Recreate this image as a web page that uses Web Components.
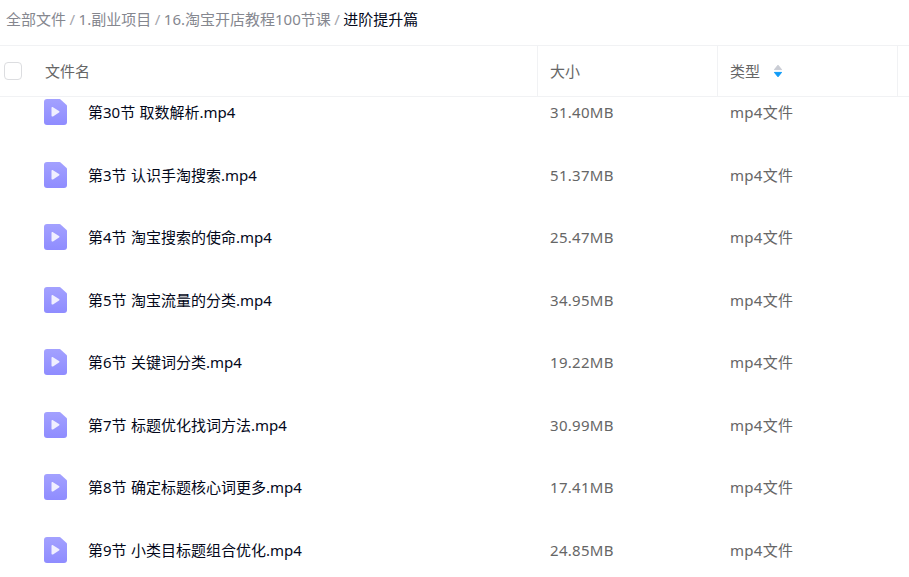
<!DOCTYPE html>
<html lang="zh">
<head>
<meta charset="utf-8">
<title>进阶提升篇</title>
<style>
  html, body { margin: 0; height: 100%; background: #fff; overflow: hidden; }
  body { font: 15px "Noto Sans", "Noto Sans CJK SC", sans-serif; }
</style>
</head>
<body>
<file-page>
  <bread-crumbs slot="crumbs">
    <span>全部文件</span><span>1.副业项目</span><span>16.淘宝开店教程100节课</span><span>进阶提升篇</span>
  </bread-crumbs>
  <file-head slot="head"></file-head>
  <file-row name="第30节 取数解析.mp4" size="31.40MB"></file-row>
  <file-row name="第3节 认识手淘搜索.mp4" size="51.37MB"></file-row>
  <file-row name="第4节 淘宝搜索的使命.mp4" size="25.47MB"></file-row>
  <file-row name="第5节 淘宝流量的分类.mp4" size="34.95MB"></file-row>
  <file-row name="第6节 关键词分类.mp4" size="19.22MB"></file-row>
  <file-row name="第7节 标题优化找词方法.mp4" size="30.99MB"></file-row>
  <file-row name="第8节 确定标题核心词更多.mp4" size="17.41MB"></file-row>
  <file-row name="第9节 小类目标题组合优化.mp4" size="24.85MB"></file-row>
</file-page>
<script>
class FilePage extends HTMLElement {
  constructor() {
    super();
    this.attachShadow({ mode: "open" });
    this.shadowRoot.innerHTML = `
      <style>
        :host { display: flex; flex-direction: column; height: 577px; overflow: hidden; }
        .list { flex: 1; min-height: 0; overflow: hidden; }
        .scroll { margin-top: -16.75px; }
      </style>
      <slot name="crumbs"></slot>
      <slot name="head"></slot>
      <div class="list"><div class="scroll"><slot></slot></div></div>
    `;
  }
}
customElements.define("file-page", FilePage);

class BreadCrumbs extends HTMLElement {
  constructor() {
    super();
    this.attachShadow({ mode: "open" });
    this.shadowRoot.innerHTML = `
      <style>
        :host { display: flex; align-items: center; box-sizing: border-box; height: 46px; padding: 0 0 8px 6px; border-bottom: 1px solid #f1f2f4; color: #85878f; }
        ::slotted(span:not(:last-child))::after { content: "/"; margin: 0 3.5px; color: #a4a6ad; }
        ::slotted(span:last-child) { color: #03081a; }
      </style>
      <slot></slot>
    `;
  }
}
customElements.define("bread-crumbs", BreadCrumbs);

class FileHead extends HTMLElement {
  constructor() {
    super();
    this.attachShadow({ mode: "open" });
    this.shadowRoot.innerHTML = `
      <style>
        :host { display: grid; grid-template-columns: 538px 180px 180px 11px; box-sizing: border-box; height: 51px; border-bottom: 1px solid #f1f2f4; color: #666; }
        .cell { display: flex; align-items: center; box-sizing: border-box; border-right: 1px solid #f1f2f4; padding: 0 0 2px 12px; }
        .name { padding-left: 4px; gap: 23px; }
        .check { width: 16px; height: 16px; border: 1px solid #dcdde0; border-radius: 4px; margin-top: 2px; }
        svg { display: block; margin: 2px 0 0 13px; }
        .end { border: 0; }
      </style>
      <div class="cell name"><span class="check"></span><span>文件名</span></div>
      <div class="cell">大小</div>
      <div class="cell">类型
        <svg width="10" height="14" viewBox="0 0 10 14">
          <path d="M5 1.2 8.6 5.6H1.4z" fill="#c9ccd4" stroke="#c9ccd4" stroke-linejoin="round"/>
          <path d="M1.4 8.4h7.2L5 12.8z" fill="#0f9bf7" stroke="#0f9bf7" stroke-linejoin="round"/>
        </svg>
      </div>
      <div class="cell end"></div>
    `;
  }
}
customElements.define("file-head", FileHead);

let gradientId = 0;
class FileRow extends HTMLElement {
  constructor() {
    super();
    this.attachShadow({ mode: "open" });
    const id = "g" + gradientId++;
    this.shadowRoot.innerHTML = `
      <style>
        :host { display: grid; grid-template-columns: 550px 180px 1fr; align-items: center; height: 62.5px; color: #666; }
        .name { display: flex; align-items: center; gap: 21px; padding-left: 44px; color: #03081a; word-spacing: .5px; }
        .name span { display: block; }
        .num { letter-spacing: .3px; }
        /* latin-only line is shorter than the cjk ones, keep the same line box */
        .size::before { content: "文"; display: inline-block; width: 0; visibility: hidden; }
        svg { display: block; flex: none; margin-top: 1px; }
      </style>
      <div class="name">
        <svg width="23" height="26" viewBox="0 0 23 26">
          <defs><linearGradient id="${id}" x1="0" y1="0" x2="0" y2="1"><stop offset="0" stop-color="#a3a1ff"/><stop offset="1" stop-color="#8f8cff"/></linearGradient></defs>
          <path d="M3 0h12.6a1.5 1.5 0 0 1 1 .4l6 5.6a1.5 1.5 0 0 1 .4 1V23a3 3 0 0 1-3 3H3a3 3 0 0 1-3-3V3a3 3 0 0 1 3-3z" fill="url(#${id})"/>
          <path d="M7.5 9c0-.8.8-1.2 1.5-.8l6 3.8c.6.4.6 1.2 0 1.6l-6 3.8c-.7.4-1.5 0-1.5-.8z" fill="#f0efff"/>
        </svg>
        <span class="t"></span>
      </div>
      <div class="size num"></div>
      <div class="num">mp4文件</div>
    `;
    this.shadowRoot.querySelector(".t").textContent = this.getAttribute("name");
    this.shadowRoot.querySelector(".size").textContent = this.getAttribute("size");
  }
}
customElements.define("file-row", FileRow);
</script>
</body>
</html>
